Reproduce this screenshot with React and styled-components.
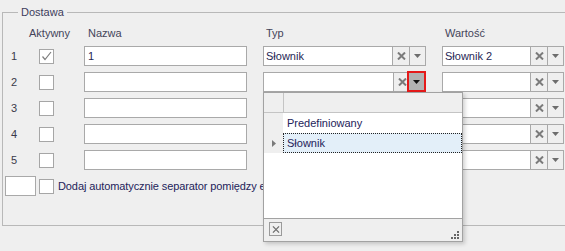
import styled, { createGlobalStyle } from "styled-components";

const GlobalStyle = createGlobalStyle`
  html, body {
    margin: 0;
    padding: 0;
    background: #efefef;
    overflow: hidden;
  }
  body {
    font-family: "Liberation Sans", Arial, sans-serif;
    font-size: 11px;
  }
`;

const rows = [
  { id: 1, checked: true, name: "1", typ: "Słownik", value: "Słownik 2" },
  { id: 2, checked: false, name: "", typ: "", value: "", open: true },
  { id: 3, checked: false, name: "", typ: "", value: "" },
  { id: 4, checked: false, name: "", typ: "", value: "" },
  { id: 5, checked: false, name: "", typ: "", value: "" },
];

const Page = styled.div`
  position: relative;
  width: 565px;
  height: 246px;
  padding-top: 5px;
`;

const Group = styled.fieldset`
  margin: 0 -20px 0 2px;
  padding: 7px 0 29px 8px;
  border: 1px solid #b8b8b8;
  min-width: 0;
`;

const Legend = styled.legend`
  margin-left: 7px;
  padding: 0 3px;
  line-height: 14px;
  color: #3d3d5c;
`;

const Grid = styled.div`
  display: grid;
  grid-template-columns: 28px 45px 179px 179px 122px;
  grid-template-rows: 14px;
  grid-auto-rows: 20px;
  row-gap: 6px;
  align-items: center;
`;

const Head = styled.div`
  height: 14px;
  line-height: 14px;
  color: #44445a;
  padding-left: ${(p) => p.$pad || 0}px;
  margin-left: ${(p) => p.$shift || 0}px;
  white-space: nowrap;
`;

const Num = styled.div`
  color: #3a3a4a;
  line-height: 20px;
`;

const Check = styled.div`
  width: 13px;
  height: 13px;
  border: 1px solid #a6a6a6;
  background: #fff;
  box-sizing: content-box;
  display: flex;
  align-items: center;
  justify-content: center;
`;

const TextBox = styled.div`
  box-sizing: border-box;
  width: ${(p) => p.$w}px;
  height: 20px;
  border: 1px solid #a9a9a9;
  background: #fff;
  padding: 0 3px;
  line-height: 18px;
  color: #1f1f55;
`;

const Combo = styled.div`
  box-sizing: border-box;
  display: flex;
  width: ${(p) => p.$w}px;
  height: 20px;
  border: 1px solid #a9a9a9;
`;

const Field = styled.div`
  flex: 1;
  background: #fff;
  padding: 0 2px;
  line-height: 18px;
  color: #1f1f55;
  white-space: nowrap;
  overflow: hidden;
`;

const Btn = styled.div`
  box-sizing: border-box;
  width: ${(p) => p.$w}px;
  border-left: 1px solid #a9a9a9;
  background: #efefef;
  display: flex;
  align-items: center;
  justify-content: center;
`;

const PressedBtn = styled.div`
  box-sizing: border-box;
  width: 19px;
  margin: -2px -1px -1px -3px;
  border: 2px solid #e51a1a;
  background: #b2b2b2;
  display: flex;
  align-items: center;
  justify-content: center;
  position: relative;
`;

const BottomRow = styled.div`
  grid-column: 1 / -1;
  display: flex;
  align-items: center;
  margin-left: -6px;
  gap: 3px;
  white-space: nowrap;
`;

const SmallBox = styled.div`
  width: 29px;
  height: 18px;
  border: 1px solid #a9a9a9;
  background: #fff;
`;

const CheckLabel = styled.span`
  color: #23235a;
  margin-left: 1px;
  letter-spacing: -0.1px;
`;

const Popup = styled.div`
  position: absolute;
  left: 263px;
  top: 92px;
  width: 198px;
  height: 148px;
  border: 1px solid #a2a2a2;
  background: #fff;
  box-shadow: 2px 2px 4px rgba(0, 0, 0, 0.18);
  display: flex;
  flex-direction: column;
`;

const List = styled.div`
  flex: 1;
  display: flex;
  flex-direction: column;
`;

const ListRow = styled.div`
  display: flex;
  height: ${(p) => (p.$header ? 19 : 20)}px;
  background: ${(p) => (p.$header ? "#efefef" : "transparent")};
  border-bottom: ${(p) => (p.$header ? "1px solid #c4c4c4" : "none")};
`;

const Indicator = styled.div`
  width: 19px;
  background: #efefef;
  border-right: ${(p) => (p.$header ? "1px solid #c4c4c4" : "none")};
  display: flex;
  align-items: center;
  justify-content: center;
`;

const Cell = styled.div`
  flex: 1;
  box-sizing: border-box;
  padding-left: 3px;
  line-height: 18px;
  color: #23235a;
  background: ${(p) => (p.$selected ? "#e3eff9" : "transparent")};
  border: 1px ${(p) => (p.$selected ? "dotted #222" : "solid transparent")};
`;

const Footer = styled.div`
  height: 22px;
  border-top: 1px solid #a2a2a2;
  background: #efefef;
  display: flex;
  align-items: center;
  justify-content: space-between;
  padding: 0 3px 0 5px;
`;

const FooterBtn = styled.div`
  width: 11px;
  height: 12px;
  border: 1px solid #9a9a9a;
  display: flex;
  align-items: center;
  justify-content: center;
  margin-top: -2px;
`;

const Grip = styled.svg`
  align-self: flex-end;
  margin-bottom: 2px;
`;

const Cross = ({ size = 9, color = "#7b7b7b", width = 2 }) => (
  <svg width={size} height={size - 1} viewBox="0 0 9 8">
    <path d="M1 0.5 L8 7.5 M8 0.5 L1 7.5" stroke={color} strokeWidth={width} />
  </svg>
);

const Arrow = ({ color = "#6d6d6d" }) => (
  <svg width="7" height="4" viewBox="0 0 7 4">
    <path d="M0 0 H7 L3.5 4 Z" fill={color} />
  </svg>
);

const Tick = () => (
  <svg width="11" height="10" viewBox="0 0 11 10">
    <path d="M1.5 5.5 L4 8.5 L10 1" fill="none" stroke="#7d7d7d" strokeWidth="1.2" />
  </svg>
);

const App = () => {
  return (
    <Page>
      <GlobalStyle />
      <Group>
        <Legend>Dostawa</Legend>
        <Grid>
          <Head />
          <Head $shift={-10}>Aktywny</Head>
          <Head $pad={4}>Nazwa</Head>
          <Head $pad={3}>Typ</Head>
          <Head $pad={3}>Wartość</Head>
          {rows.map((r) => (
            <Row key={r.id} row={r} />
          ))}
          <BottomRow>
            <SmallBox />
            <Check />
            <CheckLabel>Dodaj automatycznie separator pomiędzy elementami</CheckLabel>
          </BottomRow>
        </Grid>
      </Group>
      <Popup>
        <List>
          <ListRow $header>
            <Indicator $header />
            <Cell />
          </ListRow>
          <ListRow>
            <Indicator />
            <Cell>Predefiniowany</Cell>
          </ListRow>
          <ListRow>
            <Indicator>
              <svg width="4" height="7" viewBox="0 0 4 7">
                <path d="M0 0 L4 3.5 L0 7 Z" fill="#7a7a7a" />
              </svg>
            </Indicator>
            <Cell $selected>Słownik</Cell>
          </ListRow>
        </List>
        <Footer>
          <FooterBtn>
            <Cross size={8} color="#6a6a6a" width={1.4} />
          </FooterBtn>
          <Grip width="8" height="8" viewBox="0 0 8 8">
            <rect x="6" y="0" width="2" height="2" fill="#666" />
            <rect x="3" y="3" width="2" height="2" fill="#666" />
            <rect x="6" y="3" width="2" height="2" fill="#666" />
            <rect x="0" y="6" width="2" height="2" fill="#666" />
            <rect x="3" y="6" width="2" height="2" fill="#666" />
            <rect x="6" y="6" width="2" height="2" fill="#666" />
          </Grip>
        </Footer>
      </Popup>
    </Page>
  );
};

const Row = ({ row }) => (
  <>
    <Num>{row.id}</Num>
    <Check>{row.checked && <Tick />}</Check>
    <TextBox $w={163}>{row.name}</TextBox>
    <Combo $w={163}>
      <Field>{row.typ}</Field>
      <Btn $w={17}>
        <Cross />
      </Btn>
      {row.open ? (
        <PressedBtn>
          <Arrow color="#111" />
        </PressedBtn>
      ) : (
        <Btn $w={16}>
          <Arrow />
        </Btn>
      )}
    </Combo>
    <Combo $w={122}>
      <Field>{row.value}</Field>
      <Btn $w={17}>
        <Cross />
      </Btn>
      <Btn $w={16}>
        <Arrow />
      </Btn>
    </Combo>
  </>
);

export default App;
